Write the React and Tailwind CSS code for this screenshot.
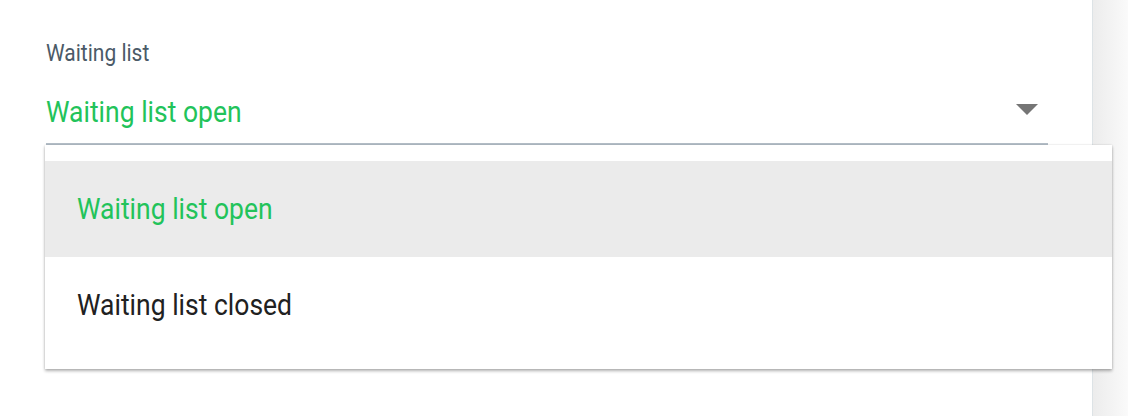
import React, { useState } from 'react';

const options = [
  { value: 'open', label: 'Waiting list open' },
  { value: 'closed', label: 'Waiting list closed' },
];

// --- Campo select con menú desplegado ---
function SelectField({ label, value, open }) {
  const current = options.find((o) => o.value === value);

  return (
    <div className="relative w-[1002px]">
      <div className="text-[21px] leading-[24px] text-[#4b5a67]">
        <span className="inline-block scale-y-110">{label}</span>
      </div>
      <div className="flex items-center justify-between h-[56px] mt-[24px] border-b-2 border-[#b4bec7]">
        <span className="inline-block scale-y-110 text-[26.5px] leading-[31px] text-[#22c35a] -mt-[10px]">{current?.label}</span>
        <svg width="22" height="11" viewBox="0 0 22 11" className="mr-[10px] -mt-[14px]">
          <path d="M0 0 L22 0 L11 11 Z" fill="#757575" />
        </svg>
      </div>

      {open && (
        <div className="absolute left-[-1px] top-[104px] w-[1067px] bg-white py-4 shadow-[0_2px_3px_rgba(0,0,0,0.3),0_0_2px_rgba(0,0,0,0.12)]">
          {options.map((opt) => (
            <div
              key={opt.value}
              className={`h-24 flex items-center pl-[32px] text-[26.5px] ${
                opt.value === value ? 'bg-[#ebebeb] text-[#22c35a]' : 'text-[#212121]'
              }`}
            >
              <span className="inline-block scale-y-110">{opt.label}</span>
            </div>
          ))}
        </div>
      )}
    </div>
  );
}

export default function App() {
  const [value] = useState('open');

  return (
    <div className="flex w-[1128px] h-[416px] overflow-hidden bg-white" style={{ fontFamily: 'Roboto, "Noto Sans", sans-serif' }}>
      {/* Panel principal */}
      <div className="w-[1093px] shrink-0 bg-white border-r border-[#dde3e6] pl-[46px] pt-[41px]">
        <SelectField label="Waiting list" value={value} open />
      </div>
      {/* Franja lateral */}
      <div className="flex-1 bg-gradient-to-r from-[#ececec] to-[#fafafa]"></div>
    </div>
  );
}
